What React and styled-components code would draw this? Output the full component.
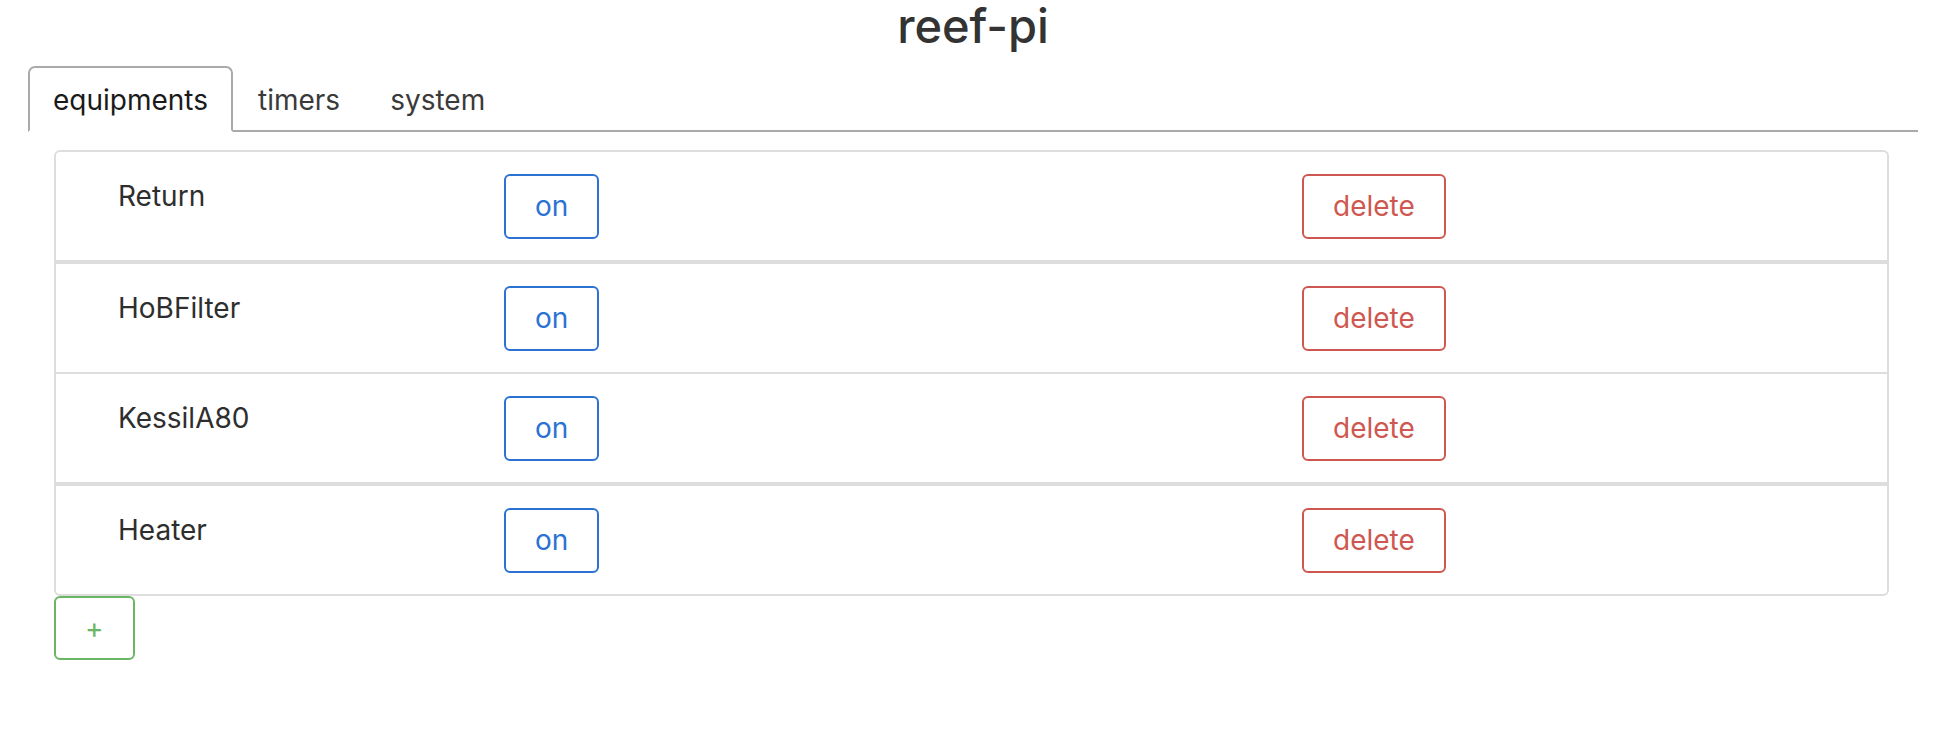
import React, { useState } from "react";
import styled, { createGlobalStyle } from "styled-components";

const GlobalStyle = createGlobalStyle`
  html, body {
    margin: 0;
    padding: 0;
    background: #fff;
  }
  body {
    font-family: Inter, "Liberation Sans", Arial, sans-serif;
    color: #333;
  }
`;

const Page = styled.div`
  padding: 0 28px;
`;

const Title = styled.h1`
  margin: 0;
  text-align: center;
  font-size: 47px;
  line-height: 52px;
  font-weight: 500;
  color: #333;
`;

const Tabs = styled.ul`
  display: flex;
  list-style: none;
  margin: 14px 0 0;
  padding: 0;
  border-bottom: 2px solid #aaa;
`;

const Tab = styled.li`
  margin-bottom: -2px;
  padding: 12px 23px 10px;
  font-size: 28px;
  line-height: 40px;
  border: 2px solid ${(p) => (p.$active ? "#aaa" : "transparent")};
  border-bottom-color: ${(p) => (p.$active ? "#fff" : "transparent")};
  border-radius: 7px 7px 0 0;
  background: ${(p) => (p.$active ? "#fff" : "transparent")};
  color: ${(p) => (p.$active ? "#1a1a1a" : "#3a3a3a")};
  cursor: pointer;
`;

const Content = styled.div`
  margin: 18px 29px 0 26px;
`;

const ListGroup = styled.div`
  border: 2px solid #ddd;
  border-radius: 6px;
`;

const Item = styled.div`
  display: grid;
  grid-template-columns: 386px 798px auto;
  align-items: start;
  padding: 22px 0 21px 62px;
  border-top: ${(p) => p.$sep}px solid #ddd;

  &:first-child {
    border-top: none;
  }
`;

const Name = styled.div`
  padding-top: 2px;
  font-size: 28px;
  line-height: 40px;
  color: #2e2e2e;
`;

const Button = styled.button`
  justify-self: start;
  margin: 0;
  padding: 10px 29px;
  font-family: inherit;
  font-size: 28px;
  line-height: ${(p) => (p.$tall ? "41px" : "40px")};
  background: #fff;
  color: ${(p) => p.$color};
  border: 2px solid ${(p) => p.$color};
  border-radius: 6px;
  cursor: pointer;
`;

const AddRow = styled.div`
  display: flex;
`;

const BLUE = "#2b72d3";
const RED = "#cf5751";
const GREEN = "#6bb664";

const initial = ["Return", "HoBFilter", "KessilA80", "Heater"];

export default function App() {
  const [tab, setTab] = useState("equipments");
  const [equipments, setEquipments] = useState(initial);

  return (
    <>
      <GlobalStyle />
      <Page>
        <Title>reef-pi</Title>
        <Tabs>
          {["equipments", "timers", "system"].map((t) => (
            <Tab key={t} $active={tab === t} onClick={() => setTab(t)}>
              {t}
            </Tab>
          ))}
        </Tabs>
        <Content>
          <ListGroup>
            {equipments.map((name, i) => (
              <Item key={name} $sep={i % 2 === 1 ? 4 : 2}>
                <Name>{name}</Name>
                <Button $color={BLUE} $tall>
                  on
                </Button>
                <Button
                  $color={RED}
                  $tall
                  onClick={() =>
                    setEquipments(equipments.filter((e) => e !== name))
                  }
                >
                  delete
                </Button>
              </Item>
            ))}
          </ListGroup>
          <AddRow>
            <Button $color={GREEN}>+</Button>
          </AddRow>
        </Content>
      </Page>
    </>
  );
}
